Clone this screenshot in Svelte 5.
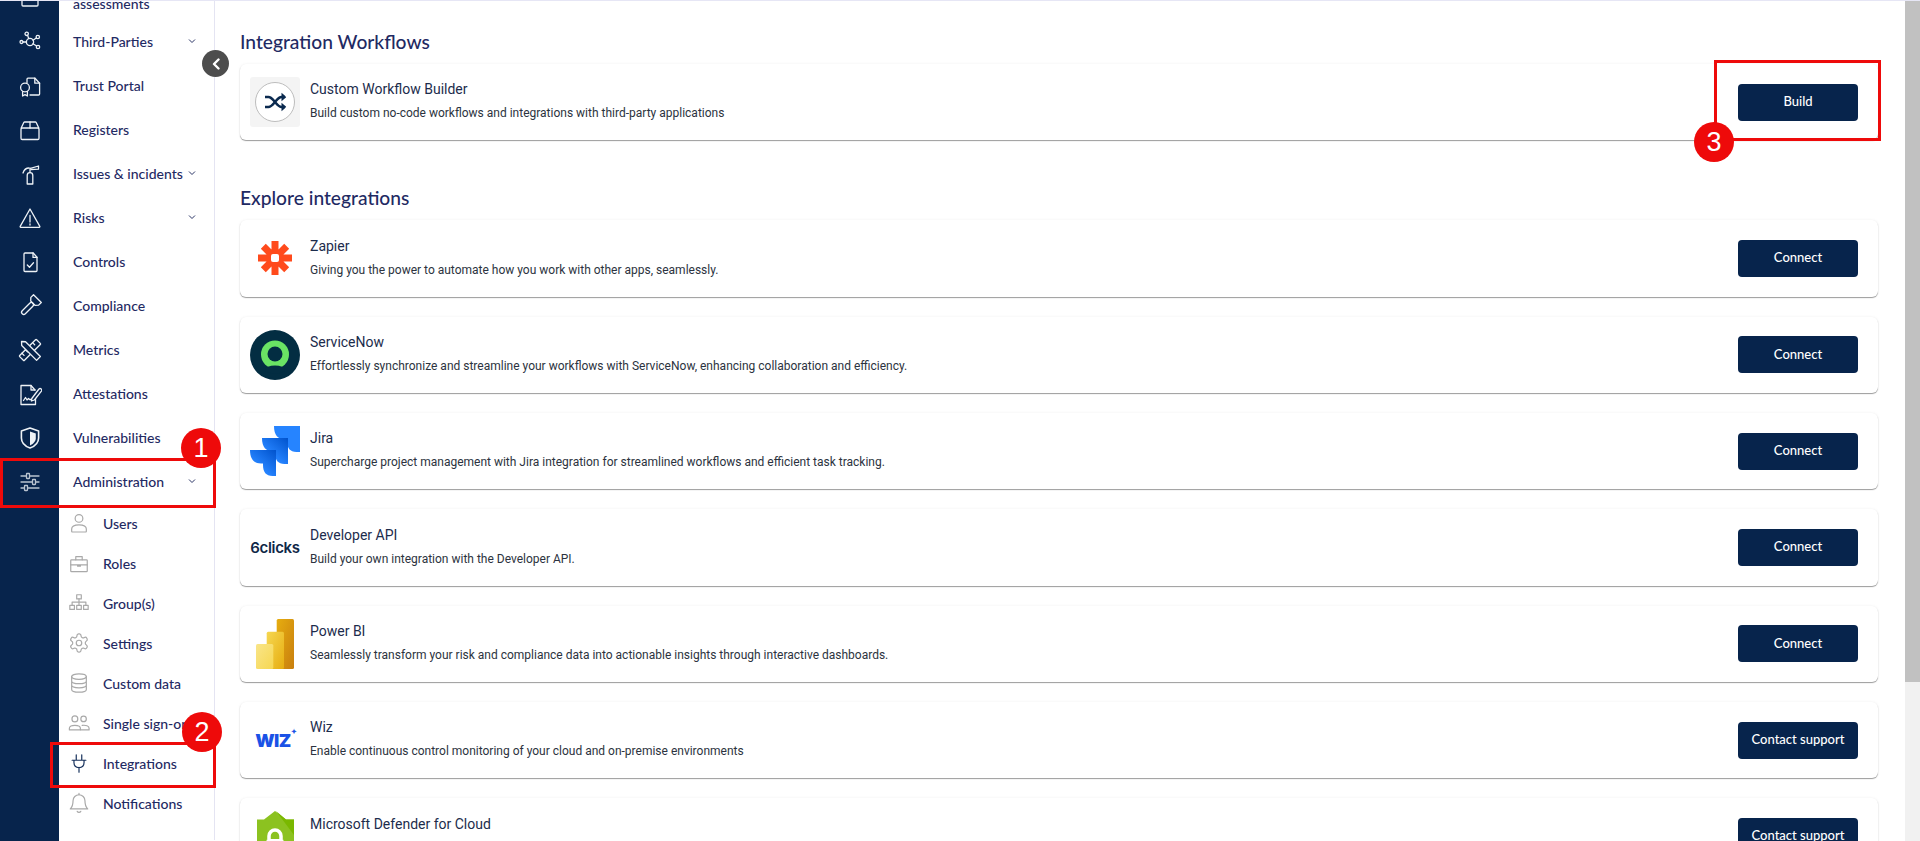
<script>
	const railIcons = [
		'<rect x="4" y="3" width="16" height="17" rx="1"/><path d="M9 14l1-3 7-7 2 2-7 7z"/>',
		'<circle cx="12" cy="12" r="3.6"/><circle cx="3.5" cy="12" r="1.5"/><circle cx="8.7" cy="3.8" r="1.7"/><circle cx="19.8" cy="7" r="1.7"/><circle cx="20" cy="17" r="1.7"/><path d="M5 12h3.4M9.6 5.4l1.2 3.2M18.3 8l-3.3 2.2M18.6 16l-3.6-2.3"/>',
		'<path d="M9 8.5V5.2a1 1 0 0 1 1-1h7l4.6 5V20a1 1 0 0 1-1 1H12"/><path d="M16.8 4.2v5h4.8"/><circle cx="7" cy="13.5" r="4.4"/><path d="M4.6 17.5V22l2.4-1.4L9.4 22v-4.5"/>',
		'<path d="M3.2 10l2.6-5.5a1 1 0 0 1 .9-.5h10.6a1 1 0 0 1 .9.5l2.6 5.5"/><rect x="3" y="10" width="18" height="11.5" rx="1.2"/><path d="M12 4v6"/>',
		'<path d="M9.2 22V13.4a2.8 2.8 0 0 1 5.6 0V22z"/><path d="M12 10.6V6.2"/><path d="M12.5 6.4L20.5 4v3.2l-7.6.4"/><path d="M11 6c-3 0-5 2-6 5"/>',
		'<path d="M12 3l9.8 17.4a.6.6 0 0 1-.5.9H2.7a.6.6 0 0 1-.5-.9z"/><path d="M12 9.5v6.5M12 17.8v1.2"/>',
		'<path d="M7 3h8.2L19 7.2V20.5a1 1 0 0 1-1 1H7a1 1 0 0 1-1-1V4a1 1 0 0 1 1-1z"/><path d="M15 3v4.4h4"/><path d="M9.3 15l2.2 2.2 4-4.4"/>',
		'<g transform="rotate(45 12 12)"><path d="M6.5 1.5h11v3.8L15 8H9L6.500 5.300z"/><rect x="9.800" y="8" width="4.400" height="15" rx="2.200"/></g>',
		'<g transform="rotate(45 12 12)"><rect x="8.600" y="0" width="6.800" height="24" rx=".8"/><path d="M8.600 5h3M8.600 10h3M8.600 15h3M8.600 20h3"/></g><g transform="rotate(-45 12 12)"><path d="M9.300 3l2.700-3 2.700 3v21H9.300z" fill="#07244c"/></g>',
		'<path d="M17.500 12V22.500H3V3.500h10l4 4.500"/><path d="M13 3.500V8h4"/><path d="M5.500 18.500l2-3 1.500 2.500 1.500-1.500 1 1h2.500"/><path d="M13.800 16.500L21 7a1.600 1.600 0 0 1 2.400 2.100L16.400 18l-3 1z" fill="#07244c"/>',
		'<path d="M12 2l8.600 3v7c0 5-4.400 8.500-8.600 10-4.200-1.500-8.600-5-8.600-10V5z" stroke-width="1.600"/><path d="M12 5.400l5.800 2v4.800c0 3.300-2.800 5.800-5.800 7.200z" fill="currentColor" stroke="none"/>',
		'<path d="M3 6h18M3 12h18M3 18h18"/><rect x="8.500" y="3.500" width="3" height="5" rx=".5" fill="#07244c"/><rect x="14.500" y="9.500" width="3" height="5" rx=".5" fill="#07244c"/><rect x="6.500" y="15.500" width="3" height="5" rx=".5" fill="#07244c"/>',
	];

	const menu = [
		{ label: 'Third-Parties', more: true },
		{ label: 'Trust Portal' },
		{ label: 'Registers' },
		{ label: 'Issues & incidents', more: true },
		{ label: 'Risks', more: true },
		{ label: 'Controls' },
		{ label: 'Compliance' },
		{ label: 'Metrics' },
		{ label: 'Attestations' },
		{ label: 'Vulnerabilities' },
		{ label: 'Administration', more: true },
	];

	const subItems = [
		{ label: 'Users', icon: '<circle cx="12" cy="7" r="4.200"/><path d="M4 21v-2.500C4 15.500 7 14 12 14s8 1.500 8 4.500V21a.8.800 0 0 1-.8.800H4.800A.8.800 0 0 1 4 21z"/>' },
		{ label: 'Roles', icon: '<rect x="3" y="8.500" width="18" height="13" rx=".8"/><path d="M8.500 8.500V5h7v3.500M3 14h18M10.500 14v1.500h3V14"/>' },
		{ label: 'Group(s)', icon: '<rect x="9.500" y="3" width="5" height="4.500"/><path d="M12 7.500V11M4.500 14.500V11h15v3.500M12 11v3.500"/><rect x="2" y="14.500" width="5" height="4.500"/><rect x="9.500" y="14.500" width="5" height="4.500"/><rect x="17" y="14.500" width="5" height="4.500"/>' },
		{ label: 'Settings', icon: '<path d="M12.220 2h-.44a2 2 0 0 0-2 2v.18a2 2 0 0 1-1 1.730l-.43.25a2 2 0 0 1-2 0l-.15-.08a2 2 0 0 0-2.730.73l-.22.38a2 2 0 0 0 .73 2.730l.15.1a2 2 0 0 1 1 1.720v.51a2 2 0 0 1-1 1.740l-.15.09a2 2 0 0 0-.73 2.730l.22.38a2 2 0 0 0 2.730.73l.15-.08a2 2 0 0 1 2 0l.43.25a2 2 0 0 1 1 1.730V20a2 2 0 0 0 2 2h.44a2 2 0 0 0 2-2v-.18a2 2 0 0 1 1-1.730l.43-.25a2 2 0 0 1 2 0l.15.08a2 2 0 0 0 2.730-.73l.22-.39a2 2 0 0 0-.73-2.730l-.15-.08a2 2 0 0 1-1-1.740v-.5a2 2 0 0 1 1-1.740l.15-.09a2 2 0 0 0 .73-2.730l-.22-.38a2 2 0 0 0-2.730-.73l-.15.08a2 2 0 0 1-2 0l-.43-.25a2 2 0 0 1-1-1.730V4a2 2 0 0 0-2-2z"/><circle cx="12" cy="12" r="3"/>' },
		{ label: 'Custom data', icon: '<ellipse cx="12" cy="5" rx="8" ry="3"/><path d="M4 5v14c0 1.700 3.600 3 8 3s8-1.300 8-3V5M4 9.700c0 1.700 3.600 3 8 3s8-1.300 8-3M4 14.300c0 1.700 3.600 3 8 3s8-1.300 8-3"/>' },
		{ label: 'Single sign-on', icon: '<circle cx="7.500" cy="7.500" r="3.200"/><circle cx="17" cy="7.500" r="3"/><path d="M1.500 19.500v-1.800c0-2.200 2.500-3.200 6-3.200s6 1 6 3.200v1.800z"/><path d="M15.500 14.600c4-.5 7.500.6 7.500 3.100v1.800h-9"/>' },
		{ label: 'Integrations', active: true, icon: '<path d="M9 3v6M15 3v6M4.500 9h15M6.500 9v2.500c0 3.500 2.500 5.500 5.500 5.500s5.500-2 5.500-5.500V9M12 17v5"/>' },
		{ label: 'Notifications', icon: '<path d="M12 3a6.500 6.500 0 0 0-6.500 6.500c0 5-1 7-3 9h19c-2-2-3-4-3-9A6.500 6.500 0 0 0 12 3z"/><path d="M12 1.500V3M10 21a2.200 2.200 0 0 0 4 0"/>' },
	];

	const workflows = [
		{ logo: 'shuffle', title: 'Custom Workflow Builder', text: 'Build custom no-code workflows and integrations with third-party applications', action: 'Build' },
	];

	const integrations = [
		{ logo: 'zapier', title: 'Zapier', text: 'Giving you the power to automate how you work with other apps, seamlessly.', action: 'Connect' },
		{ logo: 'servicenow', title: 'ServiceNow', text: 'Effortlessly synchronize and streamline your workflows with ServiceNow, enhancing collaboration and efficiency.', action: 'Connect' },
		{ logo: 'jira', title: 'Jira', text: 'Supercharge project management with Jira integration for streamlined workflows and efficient task tracking.', action: 'Connect' },
		{ logo: 'sixclicks', title: 'Developer API', text: 'Build your own integration with the Developer API.', action: 'Connect' },
		{ logo: 'powerbi', title: 'Power BI', text: 'Seamlessly transform your risk and compliance data into actionable insights through interactive dashboards.', action: 'Connect' },
		{ logo: 'wiz', title: 'Wiz', text: 'Enable continuous control monitoring of your cloud and on-premise environments', action: 'Contact support' },
		{ logo: 'defender', title: 'Microsoft Defender for Cloud', text: '\u00a0', action: 'Contact support' },
	];

	const jiraTile = 'M24 0H50V26H46.500C40 26 37 22 37 15V13.500H35C28 13.500 24 9 24 0Z';
</script>

{#snippet logo(name)}
	{#if name === 'shuffle'}
		<div class="logo-shuffle">
			<svg width="24" height="24" viewBox="0 0 24 24" fill="none" stroke="#0b2a4f" stroke-width="2.600">
				<path d="M2 7h3.500c2.500 0 3.500 1.500 6.500 5s4 5 6.500 5H20" />
				<path d="M2 17h3.500c2.500 0 3.500-1.500 6.500-5s4-5 6.500-5H20" />
				<path d="M18.500 2.800L23.500 7l-5 4.200zM18.500 12.800l5 4.200-5 4.200z" fill="#0b2a4f" stroke="none" />
			</svg>
		</div>
	{:else if name === 'zapier'}
		<svg width="50" height="50" viewBox="0 0 50 50">
			<g stroke="#ff4a1c" stroke-width="7">
				<path d="M25 8V42M8 25H42M13.300 13.300L36.700 36.700M36.700 13.300L13.300 36.700" />
			</g>
			<rect x="21" y="21" width="8" height="8" rx="2" fill="#fff" />
		</svg>
	{:else if name === 'servicenow'}
		<svg width="50" height="50" viewBox="0 0 50 50">
			<circle cx="25" cy="25" r="25" fill="#032d42" />
			<circle cx="25" cy="24.500" r="14" fill="#6ae364" />
			<circle cx="25" cy="24" r="7.500" fill="#032d42" />
			<ellipse cx="25" cy="39.500" rx="10" ry="4" fill="#032d42" />
		</svg>
	{:else if name === 'jira'}
		<svg width="50" height="50" viewBox="0 0 50 50">
			<defs>
				<linearGradient id="jira-fade" x1="1" y1="0" x2="0.400" y2="0.700">
					<stop offset="0" stop-color="#0052cc" />
					<stop offset="1" stop-color="#2684ff" />
				</linearGradient>
			</defs>
			<path d={jiraTile} fill="#2684ff" />
			<path d={jiraTile} fill="url(#jira-fade)" transform="translate(-12 12)" />
			<path d={jiraTile} fill="url(#jira-fade)" transform="translate(-24 24)" />
		</svg>
	{:else if name === 'sixclicks'}
		<span class="logo-word">6clicks</span>
	{:else if name === 'powerbi'}
		<svg width="50" height="50" viewBox="0 0 50 50">
			<defs>
				<linearGradient id="bi-a" x1="0" y1="0" x2="1" y2="1">
					<stop offset="0" stop-color="#e6ad10" />
					<stop offset="1" stop-color="#c87e0e" />
				</linearGradient>
				<linearGradient id="bi-b" x1="0" y1="0" x2="1" y2="1">
					<stop offset="0" stop-color="#f6d751" />
					<stop offset="1" stop-color="#e6ad10" />
				</linearGradient>
				<linearGradient id="bi-c" x1="0" y1="0" x2="1" y2="1">
					<stop offset="0" stop-color="#f9e589" />
					<stop offset="1" stop-color="#f6d751" />
				</linearGradient>
			</defs>
			<rect x="26.700" y="0" width="17.300" height="50" rx="1.500" fill="url(#bi-a)" />
			<rect x="16.700" y="12.700" width="17.300" height="37.300" rx="1.500" fill="url(#bi-b)" />
			<rect x="6" y="25" width="17.300" height="25" rx="1.500" fill="url(#bi-c)" />
		</svg>
	{:else if name === 'wiz'}
		<span class="logo-wiz">WIZ<i>✦</i></span>
	{:else if name === 'defender'}
		<svg width="50" height="50" viewBox="0 0 50 50">
			<path d="M7 8.500H14L25 0 36 8.500H44V40C44 44 30 50 25 50S7 44 7 40z" fill="#8cc220" />
			<path d="M44 8.500H36L26 0 44 24z" fill="#7ab800" />
			<rect x="16.500" y="28" width="17" height="15" rx="1.500" fill="#fff" />
			<path d="M19 28v-3a6 6 0 0 1 12 0v3" fill="none" stroke="#fff" stroke-width="3.500" />
		</svg>
	{/if}
{/snippet}

{#snippet card(item)}
	<div class="card">
		<div class="logo">{@render logo(item.logo)}</div>
		<div class="card-text">
			<div class="card-title">{item.title}</div>
			<div class="card-desc">{item.text}</div>
		</div>
		<button type="button" class="card-action">{item.action}</button>
	</div>
{/snippet}

<div class="page">
	<nav class="rail">
		{#each railIcons as icon, i}
			<div class="rail-item" class:dim={i === railIcons.length - 1}>
				<svg width="24" height="24" viewBox="0 0 24 24" fill="none" stroke="currentColor" stroke-width="1.300" stroke-linecap="round" stroke-linejoin="round">
					{@html icon}
				</svg>
			</div>
		{/each}
	</nav>

	<aside class="menu">
		<div class="menu-item menu-clipped">assessments</div>
		{#each menu as item}
			<div class="menu-item">
				<span>{item.label}</span>
				{#if item.more}
					<svg class="chev" width="8" height="6" viewBox="0 0 8 6" fill="none" stroke="#2b3566" stroke-width="1"><path d="M1 1.500l3 3 3-3" /></svg>
				{/if}
			</div>
		{/each}
		{#each subItems as item}
			<div class="sub-item" class:active={item.active}>
				<svg width="22" height="22" viewBox="0 0 24 24" fill="none" stroke="currentColor" stroke-width="1.300" stroke-linecap="round" stroke-linejoin="round">
					{@html item.icon}
				</svg>
				<span>{item.label}</span>
			</div>
		{/each}
	</aside>

	<main class="content">
		<h2>Integration Workflows</h2>
		<div class="cards">
			{#each workflows as item}{@render card(item)}{/each}
		</div>
		<h2 class="second">Explore integrations</h2>
		<div class="cards">
			{#each integrations as item}{@render card(item)}{/each}
		</div>
	</main>

	<div class="scrollbar"><div class="thumb"></div></div>

	<button type="button" class="collapse" aria-label="Collapse menu">
		<svg width="10" height="12" viewBox="0 0 10 12" fill="none" stroke="#fff" stroke-width="2.400" stroke-linecap="round" stroke-linejoin="round"><path d="M7.500 1.500L3 6l4.500 4.500" /></svg>
	</button>

	<div class="mark mark-one"></div>
	<div class="mark mark-two"></div>
	<div class="mark mark-three"></div>
	<div class="step step-one">1</div>
	<div class="step step-two">2</div>
	<div class="step step-three">3</div>
</div>

<style>
	:global(body) {
		margin: 0;
		background: #fff;
	}

	.page {
		position: relative;
		display: flex;
		height: 841px;
		overflow: hidden;
		box-sizing: border-box;
		border-top: 1px solid #e6e6f5;
		font-family: Lato, 'Liberation Sans', sans-serif;
	}

	.rail {
		flex: 0 0 59px;
		margin-top: -25px;
		background: #07244c;
		color: #eef2f6;
	}

	.rail-item {
		display: flex;
		align-items: center;
		justify-content: center;
		height: 44px;
	}

	.rail-item.dim {
		color: #b9c3cf;
	}

	.menu {
		flex: 0 0 156px;
		min-width: 0;
		box-sizing: border-box;
		padding-top: 0;
		margin-top: -26px;
		margin-bottom: 1px;
		border-right: 1px solid #e4e4f2;
		color: #1f2a63;
		font-size: 14px;
		font-weight: 500;
	}

	.menu-item {
		display: flex;
		align-items: center;
		justify-content: space-between;
		height: 44px;
		padding: 0 18px 0 14px;
		box-sizing: border-box;
		white-space: nowrap;
	}

	.menu-clipped {
		align-items: flex-end;
		padding-bottom: 5px;
		line-height: 20px;
	}

	.sub-item {
		display: flex;
		align-items: center;
		gap: 13px;
		height: 40px;
		padding-left: 9px;
		color: #a9a9a9;
		white-space: nowrap;
		overflow: hidden;
	}

	.sub-item span {
		color: #1f2a63;
	}

	.sub-item.active {
		color: #17315c;
	}

	.content {
		flex: 1;
		min-width: 0;
		padding: 30px 27px 0 25px;
	}

	h2 {
		margin: 0 0 11px;
		color: #1f2a63;
		font-size: 19.200px;
		font-weight: 500;
		line-height: 22px;
	}

	h2.second {
		margin-top: 47px;
		margin-bottom: 11px;
	}

	.cards {
		display: flex;
		flex-direction: column;
		gap: 20px;
	}

	.card {
		display: flex;
		align-items: center;
		gap: 10px;
		height: 76.330px;
		padding: 0 20px 0 10px;
		box-sizing: border-box;
		border-radius: 6px;
		background: #fff;
		box-shadow: 0 1px 1px rgba(0, 0, 0, 0.38), 0 0 3px rgba(0, 0, 0, 0.06);
		font-family: Roboto, 'Liberation Sans', sans-serif;
	}

	.logo {
		display: flex;
		flex: 0 0 50px;
		align-items: center;
		justify-content: center;
		min-width: 0;
		height: 50px;
	}

	.logo-shuffle {
		display: flex;
		align-items: center;
		justify-content: center;
		width: 50px;
		height: 50px;
		border-radius: 3px;
		background: #f4f4f4;
	}

	.logo-shuffle svg {
		padding: 7px;
		border: 1px solid #bdbdbd;
		border-radius: 50%;
		background: #fff;
	}

	.logo-word {
		color: #0f2747;
		font-family: Inter, sans-serif;
		font-size: 15px;
		font-weight: 600;
		letter-spacing: -0.300px;
	}

	.logo-wiz {
		position: relative;
		margin-right: 4px;
		color: #1a52e6;
		font-family: Inter, sans-serif;
		font-size: 18px;
		font-weight: 900;
		letter-spacing: -0.500px;
	}

	.logo-wiz i {
		position: absolute;
		top: -3px;
		right: -6px;
		font-size: 7px;
		font-style: normal;
	}

	.card-text {
		flex: 1;
		min-width: 0;
		padding-bottom: 2.500px;
	}

	.card-title {
		color: #1c2c4c;
		font-size: 14px;
		line-height: 20px;
	}

	.card-desc {
		margin-top: 6px;
		color: #2c3340;
		font-size: 12px;
		line-height: 17px;
	}

	.card-action {
		flex: 0 0 120px;
		height: 37px;
		padding: 0 0 2px;
		border: 0;
		border-radius: 4px;
		background: #07244c;
		color: #fff;
		font-family: Lato, sans-serif;
		font-size: 13px;
		font-weight: 500;
	}

	.scrollbar {
		flex: 0 0 15px;
		background: #f1f1f1;
	}

	.thumb {
		height: 681px;
		background: #c1c1c1;
	}

	.collapse {
		position: absolute;
		top: 49px;
		left: 202px;
		display: flex;
		align-items: center;
		justify-content: center;
		width: 27px;
		height: 27px;
		padding: 0;
		border: 0;
		border-radius: 50%;
		background: #4d4d4d;
	}

	.mark {
		position: absolute;
		box-sizing: border-box;
		border: 3px solid #ee0a0a;
	}

	.mark-one {
		top: 457px;
		left: 0;
		width: 216px;
		height: 50px;
	}

	.mark-two {
		top: 741px;
		left: 50px;
		width: 166px;
		height: 46px;
	}

	.mark-three {
		top: 59px;
		left: 1714px;
		width: 167px;
		height: 81px;
	}

	.step {
		position: absolute;
		width: 40px;
		height: 40px;
		border-radius: 50%;
		background: #ee0a0a;
		color: #fff;
		font-family: 'Liberation Sans', Arial, sans-serif;
		font-size: 27px;
		line-height: 40px;
		text-align: center;
	}

	.step-one {
		top: 427px;
		left: 181px;
	}

	.step-two {
		top: 711px;
		left: 182px;
	}

	.step-three {
		top: 121px;
		left: 1694px;
	}
</style>
